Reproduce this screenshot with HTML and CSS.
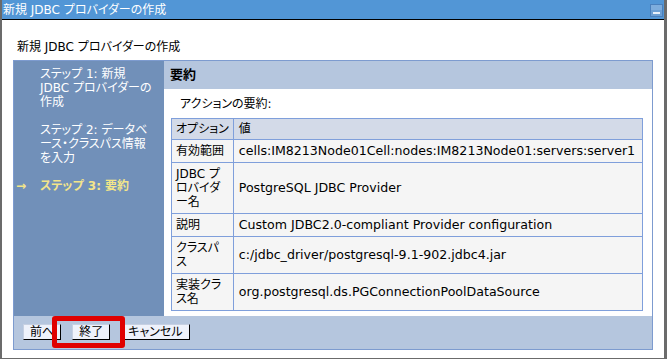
FILE: index.html
```html
<!DOCTYPE html>
<html lang="ja">
<head>
    <meta charset="UTF-8">
    <title>新規 JDBC プロバイダーの作成</title>
    <link rel="stylesheet" href="styles.css">
</head>
<body>

<div class="window">
    <div class="titlebar">
        <span class="title">新規 JDBC プロバイダーの作成</span>
        <!-- minimize button -->
        <svg class="minimize" width="13" height="13" viewBox="0 0 13 13">
            <rect x="0.5" y="0.5" width="12" height="12" fill="#6c9fd4" stroke="#4a80bd"/>
            <rect x="1" y="1" width="11" height="5" fill="#7eaddd"/>
            <rect x="3" y="8" width="7" height="2" fill="#e8f0fa"/>
        </svg>
    </div>

    <div class="content">
        <h1 class="heading">新規 JDBC プロバイダーの作成</h1>

        <div class="wizard">
            <div class="wizard-body">
                <!-- left column with the steps -->
                <div class="steps">
                    <div class="step">ステップ 1: 新規<br>JDBC プロバイダーの<br>作成</div>
                    <div class="step">ステップ 2: データベ<br>ース・クラスパス情報<br>を入力</div>
                    <div class="step current"><span class="arrow">→</span>ステップ 3: 要約</div>
                </div>

                <div class="main">
                    <div class="main-header">要約</div>
                    <div class="main-content">
                        <p class="summary-label">アクションの要約:</p>
                        <table class="summary">
                            <thead>
                                <tr>
                                    <th class="opt">オプション</th>
                                    <th>値</th>
                                </tr>
                            </thead>
                            <tbody>
                                <tr>
                                    <td class="opt">有効範囲</td>
                                    <td class="val">cells:IM8213Node01Cell:nodes:IM8213Node01:servers:server1</td>
                                </tr>
                                <tr>
                                    <td class="opt">JDBC プ<br>ロバイダ<br>ー名</td>
                                    <td class="val">PostgreSQL JDBC Provider</td>
                                </tr>
                                <tr>
                                    <td class="opt">説明</td>
                                    <td class="val">Custom JDBC2.0-compliant Provider configuration</td>
                                </tr>
                                <tr>
                                    <td class="opt">クラスパ<br>ス</td>
                                    <td class="val">c:/jdbc_driver/postgresql-9.1-902.jdbc4.jar</td>
                                </tr>
                                <tr>
                                    <td class="opt">実装クラ<br>ス名</td>
                                    <td class="val">org.postgresql.ds.PGConnectionPoolDataSource</td>
                                </tr>
                            </tbody>
                        </table>
                    </div>
                </div>
            </div>

            <div class="buttons">
                <button class="btn">前へ</button>
                <button class="btn">終了</button>
                <button class="btn">キャンセル</button>
                <div class="highlight"></div>
            </div>
        </div>
    </div>
</div>

</body>
</html>
```

FILE: styles.css
```css
body {
    margin: 0;
    background: #ffffff;
    font-family: "DejaVu Sans", "Noto Sans CJK JP", sans-serif;
    font-size: 12px;
    line-height: 14px;
    font-feature-settings: "palt";
    color: #000000;
}

.window {
    width: 667px;
    height: 359px;
    box-sizing: border-box;
    border-left: 2px solid #6b6b6b;
    border-right: 3px solid #6b6b6b;
    border-bottom: 1px solid #6b6b6b;
    background: #ffffff;
}

.titlebar {
    height: 19px;
    background: #5296d6;
    border-bottom: 1px solid #000000;
    display: flex;
    align-items: center;
    justify-content: space-between;
    padding: 0 1px 0 1px;
}

.title {
    color: #ffffff;
    font-size: 12px;
}

.minimize {
    display: block;
    margin-top: 1px;
}

.content {
    padding: 20px 11px 0 11px;
}

.heading {
    font-size: 12px;
    font-weight: normal;
    line-height: 14px;
    margin: 0 0 6px 4px;
}

.wizard {
    border: 1px solid #7d9bcf;
}

.wizard-body {
    display: flex;
}

.steps {
    width: 150px;
    flex-shrink: 0;
    background: #7190b9;
    color: #ffffff;
    padding-top: 6px;
}

.step {
    padding-left: 26px;
    margin-bottom: 14px;
}

.step.current {
    color: #f3e58a;
    font-weight: bold;
}

.arrow {
    display: inline-block;
    width: 24px;
    margin-left: -24px;
    text-align: left;
}

.main {
    flex: 1;
}

.main-header {
    background: #b5c6de;
    height: 28px;
    padding-left: 6px;
    font-size: 13px;
    font-weight: bold;
    line-height: 28px;
}

.main-content {
    padding: 8px 9px 5px 7px;
}

.summary-label {
    margin: 0 0 7px 9px;
}

.summary {
    width: 100%;
    border-collapse: collapse;
    border: 1px solid #7f9fdb;
}

.summary th,
.summary td {
    border: 1px solid #7f9fdb;
    text-align: left;
    vertical-align: middle;
    padding: 4px 4px 4px 5px;
}

.summary th {
    background: #d3dae8;
    font-weight: normal;
    padding-top: 3px;
    padding-bottom: 3px;
}

.summary td {
    background: #f5f5f5;
}

.summary .val {
    font-size: 12.6px;
}

.summary .opt {
    width: 50px;
    padding-left: 4px;
    padding-right: 4px;
    white-space: nowrap;
}

.buttons {
    position: relative;
    background: #b5c6de;
    display: flex;
    align-items: flex-start;
    gap: 11px;
    padding: 8px 9px 9px 9px;
}

.btn {
    font-family: "DejaVu Sans", "Noto Sans CJK JP", sans-serif;
    font-size: 12px;
    font-feature-settings: "palt";
    height: 16px;
    line-height: 14px;
    padding: 0 6px;
    background: #eef2fb;
    border: 1px solid;
    border-color: #c6d0e2 #000000 #000000 #c6d0e2;
    color: #000000;
}

/* red annotation box around the finish button */
.highlight {
    position: absolute;
    left: 38px;
    top: 0;
    width: 63px;
    height: 22px;
    border: 5px solid #e00000;
    border-radius: 3px;
}
```
